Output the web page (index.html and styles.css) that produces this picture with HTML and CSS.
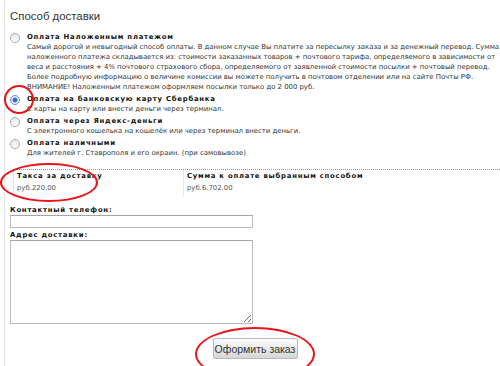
FILE: index.html
```html
<html>
	<head>
		<meta name="viewport" content="width=device-width, initial-scale=1">
		<meta charset="utf-8">
		<link rel="stylesheet" href="styles.css">
		<title>Способ доставки</title>
	</head>
	<body>
		<div class="page">
			<h2 class="ttl">Способ доставки</h2>
			<div class="opts">
				<label class="opt">
					<input type="radio" name="dlv">
					<span class="txt">
						<b>Оплата Наложенным платежом</b>
						<span class="dsc">Самый дорогой и невыгодный способ оплаты. В данном случае Вы платите за пересылку заказа и за денежный перевод. Сумма<br>наложенного платежа складывается из: стоимости заказанных товаров + почтового тарифа, определяемого в зависимости от<br>веса и расстояния + 4% почтового страхового сбора, определяемого от заявленной стоимости посылки + почтовый перевод.<br>Более подробную информацию о величине комиссии вы можете получить в почтовом отделении или на сайте Почты РФ.<br>ВНИМАНИЕ! Наложенным платежом оформляем посылки только до 2 000 руб.</span>
					</span>
				</label>
				<label class="opt">
					<input type="radio" name="dlv" checked>
					<span class="txt">
						<b>Оплата на банковскую карту Сбербанка</b>
						<span class="dsc">С карты на карту или внести деньги через терминал.</span>
					</span>
				</label>
				<label class="opt">
					<input type="radio" name="dlv">
					<span class="txt">
						<b>Оплата через Яндекс-деньги</b>
						<span class="dsc">С электронного кошелька на кошелёк или через терминал внести деньги.</span>
					</span>
				</label>
				<label class="opt">
					<input type="radio" name="dlv">
					<span class="txt">
						<b>Оплата наличными</b>
						<span class="dsc">Для жителей г. Ставрополя и его окраин. (при самовывозе)</span>
					</span>
				</label>
			</div>
			<div class="sum">
				<div class="col c1">
					<b>Такса за доставку</b>
					<span class="val">руб.220.00</span>
				</div>
				<div class="col">
					<b>Сумма к оплате выбранным способом</b>
					<span class="val">руб.6.702.00</span>
				</div>
			</div>
			<div class="frm">
				<b>Контактный телефон:</b>
				<input type="text" class="fld">
				<b>Адрес доставки:</b>
				<textarea class="fld area"></textarea>
			</div>
			<div class="btns">
				<button class="btn">Оформить заказ</button>
			</div>
		</div>
		<div class="mark m1"></div>
		<div class="mark m2"></div>
		<div class="mark m3"></div>
	</body>
</html>
```

FILE: styles.css
```css
body{
	margin:0px;
	background:#fff;
	font-family:"DejaVu Sans", Verdana, sans-serif;
	font-size:6.9px;
	color:#333;
	overflow:hidden;
}
.page{
	margin-left:4px;
	border-left:1px solid #e6e6e6;
	padding:9px 0px 0px 5px;
	height:366px;
	box-sizing:border-box;
}
.ttl{
	margin:0px;
	font-family:"Liberation Sans", Arial, sans-serif;
	font-weight:normal;
	font-size:11.4px;
	line-height:14px;
	color:#333;
}
.opts{
	margin-top:9px;
}
.opt{
	display:flex;
	align-items:flex-start;
	margin-bottom:2px;
}
.opt input{
	-webkit-appearance:none;
	appearance:none;
	width:10px;
	height:10px;
	margin:1px 7px 0px 0px;
	border:1px solid #a8a8a8;
	border-radius:50%;
	background:linear-gradient(#e8e8e8, #fff);
	box-sizing:border-box;
	flex:none;
}
.opt input:checked{
	border-color:#6b8fc7;
	background:radial-gradient(circle, #2a5bbf 0px, #3f74d6 2px, #dfe9f8 3px, #fff 5px);
}
.txt{
	line-height:10px;
}
b{
	letter-spacing:0.75px;
	color:#111;
}
.txt b{
	display:block;
}
.dsc{
	display:block;
	white-space:nowrap;
}
.sum{
	display:flex;
	margin:11px 0px 0px 3px;
	border-top:1px dotted #999;
	line-height:12px;
}
.col{
	border-left:1px solid #e6e6e6;
	padding:0px 3px 3px 3px;
}
.c1{
	width:163px;
}
.col b{
	display:block;
}
.val{
	display:block;
	color:#555;
}
.frm{
	margin-top:9px;
	display:flex;
	flex-direction:column;
	align-items:flex-start;
	line-height:9px;
}
.fld{
	width:243px;
	height:13px;
	margin:0px 0px 3px 0px;
	border:1px solid #bdbdbd;
	border-top-color:#a5a5a5;
	padding:0px;
	box-sizing:border-box;
}
.area{
	height:84px;
	resize:both;
}
.btns{
	text-align:center;
	margin-top:11px;
}
.btn{
	width:85px;
	height:21px;
	border:1px solid #b9b9b9;
	border-radius:2px;
	background:linear-gradient(#fdfdfd, #e6e6e6 60%, #d6d6d6);
	font-family:"Liberation Sans", Arial, sans-serif;
	font-size:10.5px;
	color:#333;
	padding:0px;
}
.mark{
	position:absolute;
	border:2px solid #e8141a;
	border-radius:50%;
}
.m1{
	left:4px;
	top:85px;
	width:26px;
	height:25px;
}
.m2{
	left:0px;
	top:163px;
	width:94px;
	height:35px;
}
.m3{
	left:195px;
	top:327px;
	width:116px;
	height:50px;
}
```
